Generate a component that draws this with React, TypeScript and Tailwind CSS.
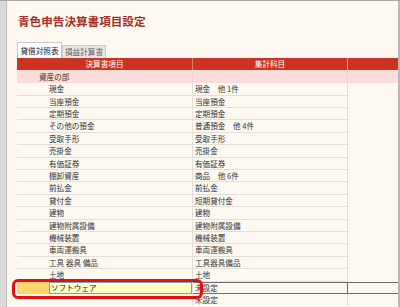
import React from "react";

const rows: [string, string][] = [
  ["現金", "現金　他 1件"],
  ["当座預金", "当座預金"],
  ["定期預金", "定期預金"],
  ["その他の預金", "普通預金　他 4件"],
  ["受取手形", "受取手形"],
  ["売掛金", "売掛金"],
  ["有価証券", "有価証券"],
  ["棚卸資産", "商品　他 6件"],
  ["前払金", "前払金"],
  ["貸付金", "短期貸付金"],
  ["建物", "建物"],
  ["建物附属設備", "建物附属設備"],
  ["機械装置", "機械装置"],
  ["車両運搬具", "車両運搬具"],
  ["工具 器具 備品", "工具器具備品"],
  ["土地", "土地"],
];

const font = { fontFamily: '"Noto Sans CJK JP", "Noto Sans", sans-serif' };

export default function App() {
  return (
    <div className="w-[400px] h-[307px] overflow-hidden flex border-t border-[#a8a8a8] bg-[#fdf9f1] text-[#333]" style={font}>
      <div className="w-[7px] shrink-0 bg-[#d9d9d9] border-r border-[#bcbcbc]" />
      <div className="flex-1 flex flex-col pl-[10px] pt-[12px] relative">
        <div className="h-[16px] text-[11.6px] leading-[16px] font-bold text-[#a33127] pl-[1px]">青色申告決算書項目設定</div>
        <div className="flex items-end h-[16px] mt-[13px]">
          <div className="w-[45px] h-[16px] bg-white border border-b-0 border-[#c8c8c8] text-[7.6px] leading-[15px] text-center text-[#222]">貸借対照表</div>
          <div className="w-[44px] h-[13px] bg-[#e6e6e6] border border-b-0 border-[#c8c8c8] text-[7.6px] leading-[12px] text-center text-[#666]">損益計算書</div>
        </div>
        <div className="grid grid-cols-[176px_155px_1fr] text-[7.6px]">
          <div className="h-[12px] bg-[#cc3322] text-white text-center leading-[12px] border-r border-[#e08070]">決算書項目</div>
          <div className="h-[12px] bg-[#cc3322] text-white text-center leading-[12px] border-r border-[#f0a090]">集計科目</div>
          <div className="h-[12px] bg-[#cc3322]" />
          <div className="h-[13.3px] bg-[#fbdddb] leading-[13px] pl-[22px] border-r border-[#eed4d0]">資産の部</div>
          <div className="h-[13.3px] bg-[#fbdddb] border-r border-[#eed4d0]" />
          <div className="h-[13.3px] bg-[#fbdddb]" />
          {rows.map(([a, b]) => (
            <React.Fragment key={a}>
              <div className="h-[12.4px] leading-[12px] pl-[32px] border-b border-r border-[#e3e0da] whitespace-nowrap">{a}</div>
              <div className="h-[12.4px] leading-[12px] pl-[2px] border-b border-r border-[#e3e0da] whitespace-nowrap">{b}</div>
              <div className="h-[12.4px]" />
            </React.Fragment>
          ))}
          <div className="h-[12.4px] flex border-r border-[#e3e0da]">
            <div className="w-[32px] bg-[#ffd36e]" />
            <div className="flex-1 bg-[#ffffc4] border border-[#7f9cc0] leading-[10px] pl-[1px] text-[#222]">ソフトウェア</div>
          </div>
          <div className="h-[12.4px] leading-[10.5px] pl-[2px] border-y border-r border-[#6e6e6e]">未設定</div>
          <div className="h-[12.4px] border-y border-[#6e6e6e]" />
          <div className="h-[12.4px] border-r border-[#e3e0da]" />
          <div className="h-[12.4px] leading-[12px] pl-[2px] border-r border-[#e3e0da]">未設定</div>
          <div className="h-[12.4px]" />
        </div>
        <div className="absolute left-[5px] top-[278px] w-[191px] h-[20px] border-[3px] border-[#e01010] rounded-[6px]" />
      </div>
      <div className="w-[2px] shrink-0 bg-[#b8b8b8]" />
    </div>
  );
}
